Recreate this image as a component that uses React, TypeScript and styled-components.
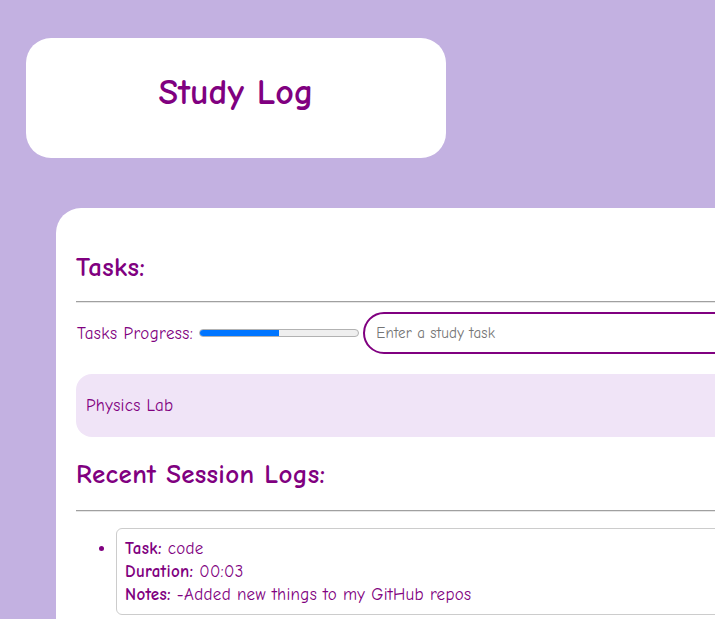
import React from "react";
import styled, { createGlobalStyle } from "styled-components";

const GlobalStyle = createGlobalStyle`
  html, body {
    margin: 0;
    padding: 0;
    overflow: hidden;
    background: #c3b1e1;
  }
  body {
    font-family: "Comic Sans MS", "Comic Neue", "DejaVu Sans", sans-serif;
    color: #800080;
    font-size: 17px;
    letter-spacing: 0.3px;
  }
`;

const Page = styled.div`
  padding: 38px 0 0 26px;
  display: flex;
  flex-direction: column;
  align-items: flex-start;
`;

const HeaderCard = styled.header`
  width: 420px;
  height: 120px;
  background: #ffffff;
  border-radius: 25px;
  display: flex;
  align-items: center;
  justify-content: center;
  box-sizing: border-box;
  padding-bottom: 10px;
`;

const Title = styled.h1`
  margin: 0;
  font-size: 36px;
  line-height: 44px;
  font-weight: bold;
  letter-spacing: 0;
  color: #800080;
`;

const MainCard = styled.main`
  margin: 50px 0 0 30px;
  width: 900px;
  background: #ffffff;
  border-radius: 25px;
  padding: 20px 20px 40px 20px;
  box-sizing: border-box;
`;

const SectionTitle = styled.h2<{ $top: number }>`
  margin: ${(p) => p.$top}px 0 0 0;
  font-size: 27px;
  line-height: 34px;
  font-weight: bold;
  letter-spacing: 0.3px;
  color: #800080;
`;

const Rule = styled.hr<{ $top: number }>`
  margin: ${(p) => p.$top}px 0 0 0;
  height: 0;
  border: none;
  border-top: 1px solid #a0a0a0;
  border-bottom: 1px solid #e6e6e6;
`;

const ProgressRow = styled.div`
  margin-top: 9px;
  display: flex;
  align-items: center;
`;

const ProgressLabel = styled.label`
  font-size: 17px;
  color: #800080;
  white-space: nowrap;
  margin-left: 1px;
  letter-spacing: 0.4px;
`;

const ProgressTrack = styled.div`
  width: 160px;
  height: 8px;
  margin: 0 4px 0 6px;
  box-sizing: border-box;
  background: #efefef;
  border: 1px solid #b2b2b2;
  border-radius: 5px;
  overflow: hidden;
  flex-shrink: 0;
`;

const ProgressFill = styled.div`
  height: 100%;
  background: #0075ff;
`;

const TaskInput = styled.input`
  flex: 1;
  height: 42px;
  box-sizing: border-box;
  border: 2px solid #800080;
  border-radius: 21px;
  padding: 0 11px;
  font-family: inherit;
  font-size: 15px;
  letter-spacing: 0.2px;
  color: #800080;
  outline: none;
  &::placeholder {
    color: #757575;
  }
`;

const TaskItem = styled.div`
  margin-top: 20px;
  background: #f0e4f7;
  border-radius: 16px;
  padding: 20px 10px;
  line-height: 23px;
  color: #800080;
`;

const LogList = styled.ul`
  margin: 16px 0 0 0;
  padding-left: 40px;
  color: #800080;
`;

const LogEntry = styled.li`
  border: 1px solid #cccccc;
  border-radius: 6px;
  padding: 8px;
  line-height: 23px;
`;

const Line = styled.div``;

const Label = styled.strong`
  font-weight: bold;
`;

export default function App() {
  const progress = 50;
  return (
    <>
      <GlobalStyle />
      <Page>
        <HeaderCard>
          <Title>Study Log</Title>
        </HeaderCard>
        <MainCard>
          <SectionTitle $top={23}>Tasks:</SectionTitle>
          <Rule $top={16} />
          <ProgressRow>
            <ProgressLabel>Tasks Progress:</ProgressLabel>
            <ProgressTrack>
              <ProgressFill style={{ width: `${progress}%` }} />
            </ProgressTrack>
            <TaskInput placeholder="Enter a study task" />
          </ProgressRow>
          <TaskItem>Physics Lab</TaskItem>
          <SectionTitle $top={21}>Recent Session Logs:</SectionTitle>
          <Rule $top={18} />
          <LogList>
            <LogEntry>
              <Line>
                <Label>Task:</Label> code
              </Line>
              <Line>
                <Label>Duration:</Label> 00:03
              </Line>
              <Line>
                <Label>Notes:</Label> -Added new things to my GitHub repos
              </Line>
            </LogEntry>
          </LogList>
        </MainCard>
      </Page>
    </>
  );
}
